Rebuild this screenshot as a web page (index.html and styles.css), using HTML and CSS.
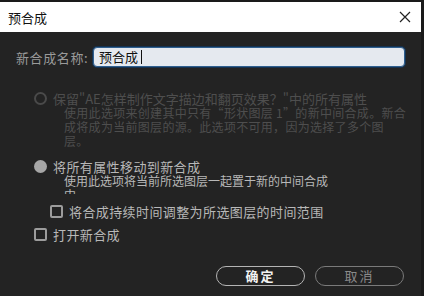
FILE: index.html
```html
<!DOCTYPE html>
<html lang="zh-CN">
<head>
    <meta charset="UTF-8">
    <meta name="viewport" content="width=device-width, initial-scale=1.0">
    <title>预合成</title>
    <link rel="stylesheet" href="styles.css">
</head>
<body>
    <div class="dialog">
        <div class="titlebar">
            <span class="title">预合成</span>
            <svg class="close" width="12" height="12" viewBox="0 0 12 12">
                <path d="M1 1 L11 11 M11 1 L1 11" stroke="#222" stroke-width="1.2" fill="none"/>
            </svg>
        </div>

        <div class="name-row">
            <label class="name-label">新合成名称:</label>
            <div class="name-input">预合成<span class="caret"></span></div>
        </div>

        <div class="option disabled">
            <div class="option-head">
                <span class="radio"></span>
                <span class="head-text">保留"AE怎样制作文字描边和翻页效果？"中的所有属性</span>
            </div>
            <div class="desc">
                使用此选项来创建其中只有“形状图层 1”的新中间合成。新合<br>
                成将成为当前图层的源。此选项不可用，因为选择了多个图<br>
                层。
            </div>
        </div>

        <div class="option second">
            <div class="option-head">
                <span class="radio checked"></span>
                <span>将所有属性移动到新合成</span>
            </div>
            <div class="desc clipped">
                使用此选项将当前所选图层一起置于新的中间合成<br>
                中。
            </div>
        </div>

        <div class="check-row indent">
            <span class="checkbox"></span>
            <span>将合成持续时间调整为所选图层的时间范围</span>
        </div>

        <div class="check-row open">
            <span class="checkbox"></span>
            <span>打开新合成</span>
        </div>

        <div class="buttons">
            <button class="btn primary">确定</button>
            <button class="btn">取消</button>
        </div>
    </div>
</body>
</html>
```

FILE: styles.css
```css
:root {
    --panel: #232323;
    --outer: #1a1a1a;
    --text: #b8b8b8;
    --muted: #9a9a9a;
    --disabled: #4e4e4e;
}

* {
    margin: 0;
    padding: 0;
    box-sizing: border-box;
}

body {
    width: 424px;
    height: 296px;
    overflow: hidden;
    background: var(--outer);
    font-family: "Noto Sans CJK SC", "Noto Sans", sans-serif;
    color: var(--text);
}

.dialog {
    width: 421px;
    height: 294px;
    margin-top: 2px;
    background: var(--panel);
    display: flex;
    flex-direction: column;
}

.titlebar {
    height: 30px;
    background: #fff;
    display: flex;
    align-items: center;
    justify-content: space-between;
    padding: 0 10px 0 8px;
    color: #111;
    font-size: 13px;
}

.name-row {
    margin-top: 15px;
    height: 20px;
    display: flex;
    align-items: center;
    padding-left: 16px;
}

.name-label {
    width: 77px;
    font-size: 13px;
    letter-spacing: 0.6px;
    color: var(--muted);
}

.name-input {
    width: 312px;
    height: 20px;
    background: #e5e9ef;
    border: 1px solid #2f5f8f;
    border-radius: 4px;
    box-shadow: 0 0 0 1px #16324f;
    color: #111;
    font-size: 13px;
    line-height: 18px;
    padding-left: 5px;
    display: flex;
    align-items: center;
}

.caret {
    width: 1px;
    height: 14px;
    background: #111;
    margin-left: 3px;
}

.option {
    padding-left: 34px;
    font-size: 13px;
    letter-spacing: 0.4px;
}

.option.disabled {
    margin-top: 24px;
    color: var(--disabled);
}

.option.disabled .head-text {
    letter-spacing: 0;
}

.option.disabled .desc {
    letter-spacing: 0.3px;
}

.option.second {
    margin-top: 11px;
}

.option-head {
    display: flex;
    align-items: center;
    height: 15px;
    line-height: 15px;
    white-space: nowrap;
}

.radio {
    width: 13px;
    height: 13px;
    border-radius: 50%;
    border: 2px solid #4a4a4a;
    margin-right: 6px;
    flex-shrink: 0;
}

.radio.checked {
    border: none;
    background: #a6a6a6;
}

.desc {
    padding-left: 30px;
    font-size: 12px;
    line-height: 14px;
    letter-spacing: 0;
    white-space: nowrap;
}

.desc.clipped {
    height: 20px;
    overflow: hidden;
}

.check-row {
    display: flex;
    align-items: center;
    height: 15px;
    font-size: 13px;
    letter-spacing: 0.4px;
    white-space: nowrap;
}

.check-row.indent {
    margin-top: 10px;
    padding-left: 50px;
}

.check-row.open {
    margin-top: 8px;
    padding-left: 34px;
}

.checkbox {
    width: 13px;
    height: 13px;
    border: 2px solid #9c9c9c;
    border-radius: 2px;
    margin-right: 6px;
    flex-shrink: 0;
}

.buttons {
    margin-top: 24px;
    display: flex;
    justify-content: flex-end;
    gap: 10px;
    padding-right: 17px;
}

.btn {
    width: 89px;
    height: 20px;
    border-radius: 10px;
    background: transparent;
    border: 1px solid #7a7a7a;
    color: #8a8a8a;
    font-family: inherit;
    font-size: 13px;
    letter-spacing: 2px;
    line-height: 18px;
}

.btn.primary {
    border-color: #b4b4b4;
    color: #f2f2f2;
    font-weight: bold;
}
```
